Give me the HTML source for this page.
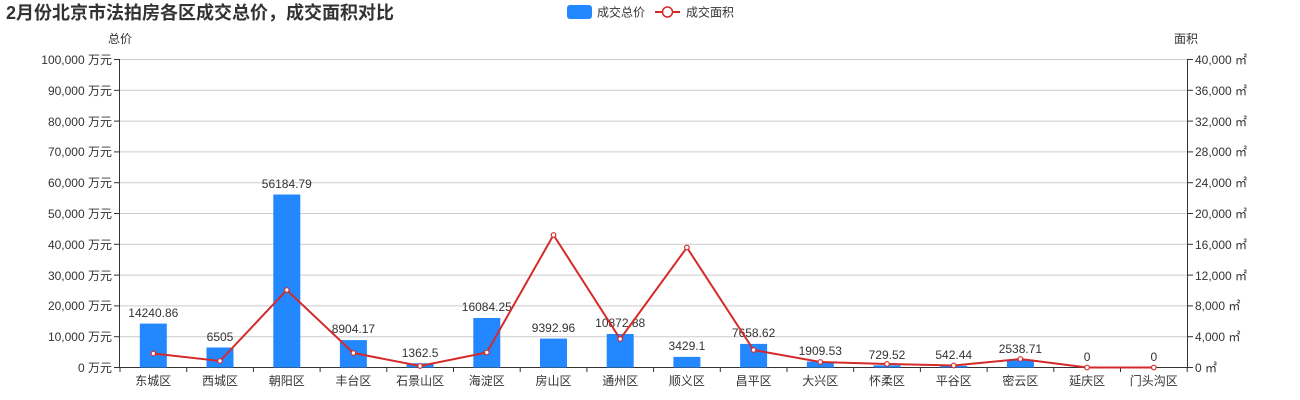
<!DOCTYPE html>
<html><head><meta charset="utf-8"><style>
html,body{margin:0;padding:0;background:#fff;width:1300px;height:400px;overflow:hidden}
svg{display:block;font-family:"Liberation Sans","Noto Sans CJK SC",sans-serif}
</style></head><body>
<svg width="1300" height="400" viewBox="0 0 1300 400">
<text x="6" y="19" font-size="18" font-weight="bold" fill="#333">2月份北京市法拍房各区成交总价，成交面积对比</text>
<rect x="567" y="5" width="25" height="14" rx="3" fill="#2388ff"/>
<text x="597" y="16.5" font-size="12" fill="#333">成交总价</text>
<line x1="655" y1="12" x2="680" y2="12" stroke="#d42a2a" stroke-width="2"/>
<circle cx="667.5" cy="12" r="5" fill="#fff" stroke="#d42a2a" stroke-width="1.5"/>
<text x="686" y="16.5" font-size="12" fill="#333">成交面积</text>
<text x="108" y="43" font-size="12" fill="#333">总价</text>
<text x="1174" y="43" font-size="12" fill="#333">面积</text>
<g stroke="#ccc" stroke-width="1">
<line x1="120" y1="59.5" x2="1187" y2="59.5"/><line x1="120" y1="90.3" x2="1187" y2="90.3"/>
<line x1="120" y1="121.1" x2="1187" y2="121.1"/><line x1="120" y1="151.9" x2="1187" y2="151.9"/>
<line x1="120" y1="182.7" x2="1187" y2="182.7"/><line x1="120" y1="213.5" x2="1187" y2="213.5"/>
<line x1="120" y1="244.3" x2="1187" y2="244.3"/><line x1="120" y1="275.1" x2="1187" y2="275.1"/>
<line x1="120" y1="305.9" x2="1187" y2="305.9"/><line x1="120" y1="336.7" x2="1187" y2="336.7"/>
</g>
<g stroke="#333" stroke-width="1">
<line x1="119.5" y1="59" x2="119.5" y2="368"/>
<line x1="1187.5" y1="59" x2="1187.5" y2="368"/>
<line x1="119" y1="367.5" x2="1188" y2="367.5"/>
</g>
<g stroke="#333" stroke-width="1">
<line x1="114" y1="59.5" x2="119" y2="59.5"/><line x1="114" y1="90.3" x2="119" y2="90.3"/><line x1="114" y1="121.1" x2="119" y2="121.1"/><line x1="114" y1="151.9" x2="119" y2="151.9"/><line x1="114" y1="182.7" x2="119" y2="182.7"/><line x1="114" y1="213.5" x2="119" y2="213.5"/><line x1="114" y1="244.3" x2="119" y2="244.3"/><line x1="114" y1="275.1" x2="119" y2="275.1"/><line x1="114" y1="305.9" x2="119" y2="305.9"/><line x1="114" y1="336.7" x2="119" y2="336.7"/><line x1="114" y1="367.5" x2="119" y2="367.5"/>
<line x1="1188" y1="59.5" x2="1193" y2="59.5"/><line x1="1188" y1="90.3" x2="1193" y2="90.3"/><line x1="1188" y1="121.1" x2="1193" y2="121.1"/><line x1="1188" y1="151.9" x2="1193" y2="151.9"/><line x1="1188" y1="182.7" x2="1193" y2="182.7"/><line x1="1188" y1="213.5" x2="1193" y2="213.5"/><line x1="1188" y1="244.3" x2="1193" y2="244.3"/><line x1="1188" y1="275.1" x2="1193" y2="275.1"/><line x1="1188" y1="305.9" x2="1193" y2="305.9"/><line x1="1188" y1="336.7" x2="1193" y2="336.7"/><line x1="1188" y1="367.5" x2="1193" y2="367.5"/>
<line x1="120" y1="367" x2="120" y2="372"/><line x1="186.7" y1="367" x2="186.7" y2="372"/><line x1="253.4" y1="367" x2="253.4" y2="372"/><line x1="320.1" y1="367" x2="320.1" y2="372"/><line x1="386.8" y1="367" x2="386.8" y2="372"/><line x1="453.5" y1="367" x2="453.5" y2="372"/><line x1="520.2" y1="367" x2="520.2" y2="372"/><line x1="586.9" y1="367" x2="586.9" y2="372"/><line x1="653.6" y1="367" x2="653.6" y2="372"/><line x1="720.3" y1="367" x2="720.3" y2="372"/><line x1="787" y1="367" x2="787" y2="372"/><line x1="853.7" y1="367" x2="853.7" y2="372"/><line x1="920.4" y1="367" x2="920.4" y2="372"/><line x1="987.1" y1="367" x2="987.1" y2="372"/><line x1="1053.8" y1="367" x2="1053.8" y2="372"/><line x1="1120.5" y1="367" x2="1120.5" y2="372"/><line x1="1187.2" y1="367" x2="1187.2" y2="372"/>
</g>
<g font-size="12" fill="#333" text-anchor="end">
<text x="112" y="64">100,000 万元</text><text x="112" y="95">90,000 万元</text><text x="112" y="126">80,000 万元</text><text x="112" y="156">70,000 万元</text><text x="112" y="187">60,000 万元</text><text x="112" y="218">50,000 万元</text><text x="112" y="249">40,000 万元</text><text x="112" y="280">30,000 万元</text><text x="112" y="310">20,000 万元</text><text x="112" y="341">10,000 万元</text><text x="112" y="372">0 万元</text>
</g>
<g font-size="12" fill="#333">
<text x="1195" y="64">40,000 ㎡</text><text x="1195" y="95">36,000 ㎡</text><text x="1195" y="126">32,000 ㎡</text><text x="1195" y="156">28,000 ㎡</text><text x="1195" y="187">24,000 ㎡</text><text x="1195" y="218">20,000 ㎡</text><text x="1195" y="249">16,000 ㎡</text><text x="1195" y="280">12,000 ㎡</text><text x="1195" y="310">8,000 ㎡</text><text x="1195" y="341">4,000 ㎡</text><text x="1195" y="372">0 ㎡</text>
</g>
<g fill="#2388ff">
<rect x="139.8" y="323.6" width="27" height="43.9"/>
<rect x="206.5" y="347.5" width="27" height="20"/>
<rect x="273.3" y="194.5" width="27" height="173"/>
<rect x="339.9" y="340.1" width="27" height="27.4"/>
<rect x="406.6" y="363.3" width="27" height="4.2"/>
<rect x="473.3" y="318" width="27" height="49.5"/>
<rect x="540" y="338.6" width="27" height="28.9"/>
<rect x="606.7" y="334" width="27" height="33.5"/>
<rect x="673.4" y="356.9" width="27" height="10.6"/>
<rect x="740.1" y="343.9" width="27" height="23.6"/>
<rect x="806.8" y="361.6" width="27" height="5.9"/>
<rect x="873.5" y="365.3" width="27" height="2.2"/>
<rect x="940.2" y="365.8" width="27" height="1.7"/>
<rect x="1006.9" y="359.7" width="27" height="7.8"/>
</g>
<g font-size="12" fill="#333" text-anchor="middle">
<text x="153.3" y="317">14240.86</text><text x="220" y="341">6505</text><text x="286.8" y="188">56184.79</text><text x="353.4" y="333">8904.17</text><text x="420.1" y="357">1362.5</text><text x="486.8" y="311">16084.25</text><text x="553.5" y="332">9392.96</text><text x="620.2" y="327">10872.88</text><text x="686.9" y="350">3429.1</text><text x="753.6" y="337">7658.62</text><text x="820.3" y="355">1909.53</text><text x="887" y="359">729.52</text><text x="953.7" y="359">542.44</text><text x="1020.4" y="353">2538.71</text><text x="1087.1" y="361">0</text><text x="1153.8" y="361">0</text>
</g>
<g font-size="12" fill="#333" text-anchor="middle">
<text x="153.3" y="385">东城区</text><text x="220" y="385">西城区</text><text x="286.8" y="385">朝阳区</text><text x="353.4" y="385">丰台区</text><text x="420.1" y="385">石景山区</text><text x="486.8" y="385">海淀区</text><text x="553.5" y="385">房山区</text><text x="620.2" y="385">通州区</text><text x="686.9" y="385">顺义区</text><text x="753.6" y="385">昌平区</text><text x="820.3" y="385">大兴区</text><text x="887" y="385">怀柔区</text><text x="953.7" y="385">平谷区</text><text x="1020.4" y="385">密云区</text><text x="1087.1" y="385">延庆区</text><text x="1153.8" y="385">门头沟区</text>
</g>
<polyline fill="none" stroke="#d42a2a" stroke-width="2" points="153.3,353.5 220,361 286.8,290 353.4,353 420.1,366 486.8,352.5 553.5,235 620.2,339 686.9,247.5 753.6,350 820.3,362 887,364 953.7,365.5 1020.4,359 1087.1,367.5 1153.8,367.5"/>
<g fill="#fff" stroke="#d42a2a" stroke-width="1.2">
<circle cx="153.3" cy="353.5" r="2.3"/><circle cx="220" cy="361" r="2.3"/><circle cx="286.8" cy="290" r="2.3"/><circle cx="353.4" cy="353" r="2.3"/><circle cx="420.1" cy="366" r="2.3"/><circle cx="486.8" cy="352.5" r="2.3"/><circle cx="553.5" cy="235" r="2.3"/><circle cx="620.2" cy="339" r="2.3"/><circle cx="686.9" cy="247.5" r="2.3"/><circle cx="753.6" cy="350" r="2.3"/><circle cx="820.3" cy="362" r="2.3"/><circle cx="887" cy="364" r="2.3"/><circle cx="953.7" cy="365.5" r="2.3"/><circle cx="1020.4" cy="359" r="2.3"/><circle cx="1087.1" cy="367.5" r="2.3"/><circle cx="1153.8" cy="367.5" r="2.3"/>
</g>
</svg>
</body></html>
